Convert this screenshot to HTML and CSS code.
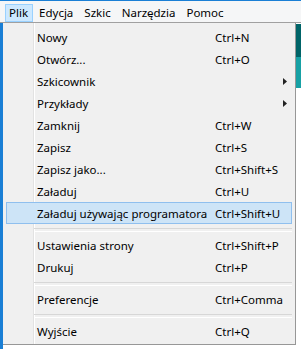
FILE: index.html
```html
<!DOCTYPE html>
<html lang="pl">
<head>
<meta charset="utf-8">
<link rel="stylesheet" href="styles.css">
</head>
<body>
<div class="screen">
  <div class="topline"></div>
  <div class="menubar">
    <span class="mb-item active">Plik</span>
    <span class="mb-item">Edycja</span>
    <span class="mb-item">Szkic</span>
    <span class="mb-item">Narzędzia</span>
    <span class="mb-item">Pomoc</span>
  </div>
  <div class="main">
    <div class="leftbar"></div>
    <div class="menu">
      <div class="item"><span class="label">Nowy</span><span class="key">Ctrl+N</span></div>
      <div class="item"><span class="label">Otwórz...</span><span class="key">Ctrl+O</span></div>
      <div class="item"><span class="label">Szkicownik</span><span class="key"></span><span class="arrow"><svg width="4" height="7" viewBox="0 0 4 7"><polygon points="0,0 4,3.5 0,7" fill="#222"/></svg></span></div>
      <div class="item"><span class="label">Przykłady</span><span class="key"></span><span class="arrow"><svg width="4" height="7" viewBox="0 0 4 7"><polygon points="0,0 4,3.5 0,7" fill="#222"/></svg></span></div>
      <div class="item"><span class="label">Zamknij</span><span class="key">Ctrl+W</span></div>
      <div class="item"><span class="label">Zapisz</span><span class="key">Ctrl+S</span></div>
      <div class="item"><span class="label">Zapisz jako...</span><span class="key">Ctrl+Shift+S</span></div>
      <div class="item"><span class="label">Załaduj</span><span class="key">Ctrl+U</span></div>
      <div class="item hover"><span class="label">Załaduj używając programatora</span><span class="key">Ctrl+Shift+U</span></div>
      <div class="sep"></div>
      <div class="item"><span class="label">Ustawienia strony</span><span class="key">Ctrl+Shift+P</span></div>
      <div class="item"><span class="label">Drukuj</span><span class="key">Ctrl+P</span></div>
      <div class="sep"></div>
      <div class="item"><span class="label">Preferencje</span><span class="key">Ctrl+Comma</span></div>
      <div class="sep"></div>
      <div class="item"><span class="label">Wyjście</span><span class="key">Ctrl+Q</span></div>
    </div>
    <div class="rightstrip">
      <div class="teal-dark"></div>
      <div class="teal-light"></div>
    </div>
  </div>
</div>
</body>
</html>
```

FILE: styles.css
```css
* { box-sizing: border-box; }
html, body {
  margin: 0;
  padding: 0;
  background: #ffffff;
}
body {
  font-family: "Noto Sans", "Open Sans", sans-serif;
  font-size: 11.5px;
  color: #000;
}
.screen {
  width: 301px;
  height: 349px;
  overflow: hidden;
  display: flex;
  flex-direction: column;
}
.topline {
  height: 1px;
  background: #1a7fd5;
  flex: none;
}
.menubar {
  height: 22px;
  flex: none;
  background: #f5f6f7;
  border-bottom: 1px solid #a0a0a0;
  display: flex;
  align-items: flex-end;
  gap: 2px;
  padding-left: 5px;
}
.mb-item {
  height: 18px;
  line-height: 16px;
  padding: 0 4px 0 3px;
  border: 1px solid transparent;
  white-space: nowrap;
}
.mb-item.active {
  background: #cce8ff;
  border-color: #99d1ff;
}
.main {
  flex: 1;
  display: flex;
}
.leftbar {
  width: 3px;
  flex: none;
  background: #1a7fd5;
}
.menu {
  width: 293px;
  height: 322px;
  flex: none;
  border-right: 1px solid #979797;
  border-bottom: 1px solid #979797;
  padding: 3px 0 2px 0;
  background:
    linear-gradient(to right, transparent 30px, #e2e2e2 30px, #e2e2e2 31px, #ffffff 31px, #ffffff 32px, transparent 32px),
    #f0f0f0;
}
.item {
  height: 22px;
  margin: 0 3px;
  padding-left: 30px;
  border: 1px solid transparent;
  display: grid;
  grid-template-columns: 178px 68px 1fr;
  align-items: center;
  white-space: nowrap;
}
.item.hover {
  background: #cde4f7;
  border-color: #8fbfee;
}
.arrow {
  display: flex;
  align-items: center;
}
.arrow svg { display: block; }
.sep {
  height: 10px;
  margin: 0 3px 0 31px;
  padding-top: 4px;
}
.sep::before {
  content: "";
  display: block;
  height: 2px;
  border-top: 1px solid #d7d7d7;
  border-bottom: 1px solid #ffffff;
}
.rightstrip {
  flex: 1;
  padding-top: 1px;
  display: flex;
  flex-direction: column;
}
.teal-dark {
  height: 33px;
  background: #006468;
}
.teal-light {
  height: 31px;
  background: #17a1a5;
}
```
